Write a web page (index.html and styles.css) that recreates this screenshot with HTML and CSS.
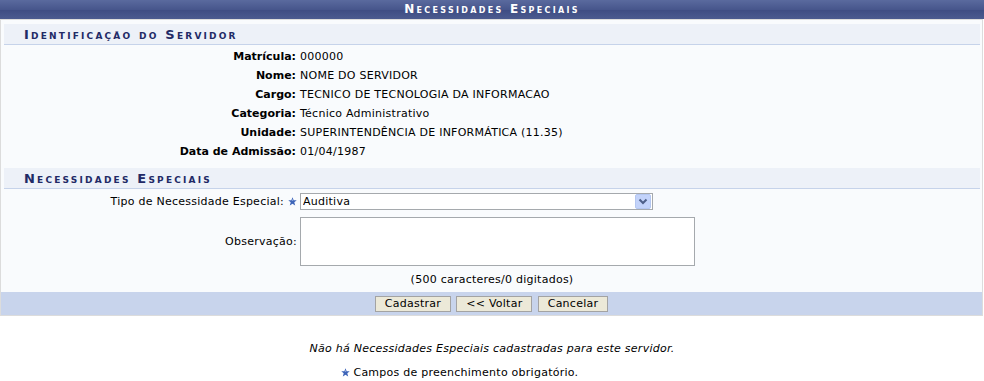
FILE: index.html
```html
<!DOCTYPE html>
<html>
<head>
  <meta charset="utf-8">
  <title>Necessidades Especiais</title>
  <link rel="stylesheet" href="styles.css">
</head>
<body>
  <div class="caption">Necessidades Especiais</div>

  <div class="panel">
    <div class="section-title">Identificação do Servidor</div>
    <div class="fields">
      <div class="label">Matrícula:</div><div class="value">000000</div>
      <div class="label">Nome:</div><div class="value">NOME DO SERVIDOR</div>
      <div class="label">Cargo:</div><div class="value">TECNICO DE TECNOLOGIA DA INFORMACAO</div>
      <div class="label">Categoria:</div><div class="value">Técnico Administrativo</div>
      <div class="label">Unidade:</div><div class="value">SUPERINTENDÊNCIA DE INFORMÁTICA (11.35)</div>
      <div class="label">Data de Admissão:</div><div class="value">01/04/1987</div>
    </div>

    <div class="section-title second">Necessidades Especiais</div>
    <div class="form">
      <div class="form-label">Tipo de Necessidade Especial:
        <svg class="star" viewBox="0 0 10 10"><polygon points="5,0.4 6.3,3.6 9.7,3.7 7,5.9 8,9.4 5,7.4 2,9.4 3,5.9 0.3,3.7 3.7,3.6" fill="#3d64b8"/><polygon points="5,2 5.8,4.3 4.2,4.3" fill="#9fb6e6"/></svg>
      </div>
      <div class="select-box">
        <select>
          <option>Auditiva</option>
        </select>
        <svg class="select-arrow" viewBox="0 0 16 15">
          <rect x="0.5" y="0.5" width="15" height="14" rx="1.5" fill="#c3d3fa" stroke="#b4c7f1"/>
          <path d="M4.5 5.5 L8 9 L11.5 5.5" fill="none" stroke="#4d5f88" stroke-width="2"/>
        </svg>
      </div>
      <div class="form-label">Observação:</div>
      <div><textarea></textarea></div>
    </div>
    <div class="counter">(500 caracteres/0 digitados)</div>

    <div class="actions">
      <button>Cadastrar</button>
      <button>&lt;&lt; Voltar</button>
      <button>Cancelar</button>
    </div>
  </div>

  <p class="empty">Não há Necessidades Especiais cadastradas para este servidor.</p>
  <p class="required">
    <svg class="star" viewBox="0 0 10 10"><polygon points="5,0.4 6.3,3.6 9.7,3.7 7,5.9 8,9.4 5,7.4 2,9.4 3,5.9 0.3,3.7 3.7,3.6" fill="#3d64b8"/><polygon points="5,2 5.8,4.3 4.2,4.3" fill="#9fb6e6"/></svg>
    Campos de preenchimento obrigatório.
  </p>
</body>
</html>
```

FILE: styles.css
```css
body {
  margin: 0;
  font-family: "DejaVu Sans", Verdana, sans-serif;
  font-size: 11px;
  letter-spacing: 0.25px;
  color: #000;
  background: #fff;
}

.caption {
  height: 19px;
  line-height: 19px;
  text-align: center;
  color: #fff;
  font-size: 12px;
  font-weight: bold;
  font-variant: small-caps;
  letter-spacing: 2.3px;
  background: linear-gradient(#5a6a9e, #47568c 50%, #3f4d84 55%, #4b5a8f);
}

.panel {
  width: 983px;
  box-sizing: border-box;
  border: 1px solid #dcdcdc;
  background-color: #f9fbfd;
  padding: 4px 2px 0 3px;
}

.section-title {
  height: 20px;
  line-height: 21px;
  padding-left: 20px;
  background-color: #edf1f8;
  border-bottom: 1px solid #c6d3ea;
  color: #222a66;
  font-weight: bold;
  font-variant: small-caps;
  letter-spacing: 2.2px;
  font-size: 13px;
}

.section-title.second {
  margin-top: 7px;
}

.fields {
  display: grid;
  grid-template-columns: 292px 1fr;
  grid-auto-rows: 19px;
  column-gap: 4px;
  padding-top: 2px;
  align-items: center;
}

.fields .label {
  text-align: right;
  font-weight: bold;
  letter-spacing: 0;
}

.form {
  display: grid;
  grid-template-columns: 293px 1fr;
  column-gap: 3px;
  row-gap: 7px;
  padding-top: 4px;
  align-items: center;
}

.form-label {
  text-align: right;
  display: flex;
  justify-content: flex-end;
  align-items: center;
  gap: 4px;
}

.star {
  width: 9px;
  height: 9px;
}

.select-box {
  position: relative;
  width: 353px;
  height: 17px;
}

.select-box select {
  appearance: none;
  -webkit-appearance: none;
  width: 353px;
  height: 17px;
  box-sizing: border-box;
  border: 1px solid #a5a9ad;
  background: #fff;
  font-family: "DejaVu Sans", Verdana, sans-serif;
  font-size: 11px;
  letter-spacing: 0.25px;
  padding: 0 2px;
  margin: 0;
  border-radius: 0;
  color: #000;
}

.select-arrow {
  position: absolute;
  right: 2px;
  top: 1px;
  width: 16px;
  height: 15px;
}

textarea {
  display: block;
  width: 395px;
  height: 49px;
  box-sizing: border-box;
  border: 1px solid #a5a9ad;
  resize: none;
  margin: 0;
  background: #fff;
}

.counter {
  text-align: center;
  line-height: 14px;
  margin-top: 7px;
}

.actions {
  margin: 5px -2px 0 -3px;
  padding: 4px 0 3px;
  background-color: #c8d4ec;
  text-align: center;
  font-size: 0;
}

.actions button {
  height: 16px;
  margin: 0 0 0 5px;
  padding: 0 9px;
  border: 1px solid #a3a3a3;
  background-color: #ece9d8;
  font-family: "DejaVu Sans", Verdana, sans-serif;
  font-size: 11px;
  letter-spacing: 0.25px;
  line-height: 14px;
  color: #000;
  vertical-align: top;
}

.actions button:first-child {
  margin-left: 0;
}

.empty {
  margin: 26px 0 0;
  line-height: 14px;
  text-align: center;
  font-style: italic;
}

.required {
  margin: 10px 0 0;
  line-height: 14px;
  text-align: center;
  padding-right: 65px;
}

.required .star {
  vertical-align: -1px;
}
```
